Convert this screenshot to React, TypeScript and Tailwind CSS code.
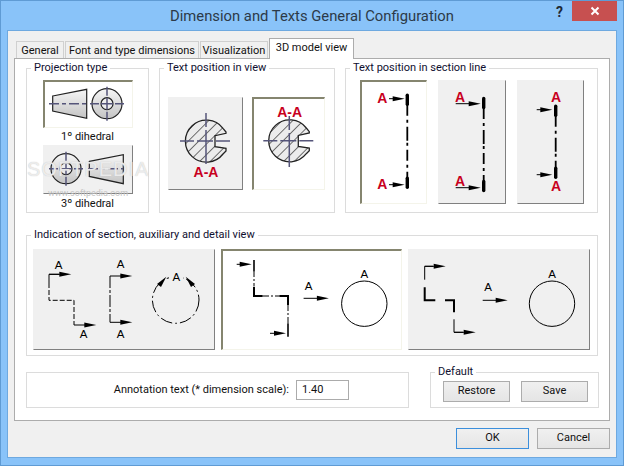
import type { ReactNode } from 'react'

const ui = { fontFamily: 'Roboto, "Liberation Sans", sans-serif' }
const RED = '#c8001e'
const CROSS = '#55557a'

function Arrow({ x1, x2, y, head = 12 }: { x1: number; x2: number; y: number; head?: number }) {
  return (
    <g>
      <line x1={x1} y1={y} x2={x2 - head + 1} y2={y} stroke="#000" strokeWidth={1} />
      <polygon points={`${x2 - head},${y - 2.5} ${x2},${y} ${x2 - head},${y + 2.5}`} fill="#000" />
    </g>
  )
}

function RedA({ x, y, children = 'A', size = 14 }: { x: number; y: number; children?: string; size?: number }) {
  return (
    <text x={x} y={y} textAnchor="middle" fontFamily="Liberation Sans" fontWeight="bold" fontSize={size} fill={RED}>
      {children}
    </text>
  )
}

function SmallA({ x, y }: { x: number; y: number }) {
  return (
    <text x={x} y={y} textAnchor="middle" fontFamily="Liberation Sans" fontSize={11.5} fill="#000">
      A
    </text>
  )
}

function Picture({
  w,
  h,
  sunken = false,
  children,
}: {
  w: number
  h: number
  sunken?: boolean
  children: ReactNode
}) {
  const frame = sunken
    ? 'bg-white border-t-2 border-l-2 border-r border-b border-t-[#85856f] border-l-[#85856f] border-r-[#f4f4ea] border-b-[#f4f4ea]'
    : 'bg-[#f0f0f0] border border-t-[#f0f0f0] border-l-[#f0f0f0] border-r-[#808080] border-b-[#808080]'
  const shift = sunken ? '-mt-[2px] -ml-[2px]' : '-m-px'
  return (
    <div className={`shrink-0 box-border ${frame}`} style={{ width: w, height: h }}>
      {/* drawing coordinates are relative to the outer edge of the button */}
      <svg width={w} height={h} viewBox={`0 0 ${w} ${h}`} className={`block ${shift}`}>
        {children}
      </svg>
    </div>
  )
}

function Grad() {
  return (
    <defs>
      <linearGradient id="steel" x1="0" y1="0" x2="0" y2="1">
        <stop offset="0" stopColor="#f6f6f6" />
        <stop offset="1" stopColor="#c4c4c4" />
      </linearGradient>
      <pattern id="hatch" width="7.5" height="7.5" patternUnits="userSpaceOnUse" patternTransform="rotate(45)">
        <rect width="7.5" height="7.5" fill="#ececec" />
        <line x1="0" y1="0" x2="0" y2="7.5" stroke="#222" strokeWidth="1.25" />
      </pattern>
    </defs>
  )
}

function Cone({ x, top }: { x: number; top: number }) {
  const pts = `${x},${top + 6.7} ${x + 34},${top} ${x + 34},${top + 29} ${x},${top + 21.7}`
  return <polygon points={pts} fill="url(#steel)" stroke="#222" strokeWidth={1.2} />
}

function Wheel({ cx, cy }: { cx: number; cy: number }) {
  return (
    <g>
      <circle cx={cx} cy={cy} r={15} fill="url(#steel)" stroke="#222" strokeWidth={1.2} />
      <circle cx={cx} cy={cy} r={6} fill="#eee" stroke="#222" strokeWidth={1.2} />
      <line x1={cx - 17} y1={cy} x2={cx + 17} y2={cy} stroke={CROSS} strokeWidth={1.5} strokeDasharray="9 2 12 2 9" />
      <line x1={cx} y1={cy - 17} x2={cx} y2={cy + 17} stroke={CROSS} strokeWidth={1.5} strokeDasharray="9 2 12 2 9" />
    </g>
  )
}

function KeyedShaft({ cx, cy, up = 28, down = 23 }: { cx: number; cy: number; up?: number; down?: number }) {
  const p = (dx: number, dy: number) => `${cx + dx} ${cy + dy}`
  const d = `M${p(17, -12.7)} L${p(20, -9)} L${p(20, -7.7)} L${p(9, -5.3)} L${p(9, 5.7)} L${p(20, 7.3)} L${p(20, 10)} L${p(
    17,
    13,
  )} A21 21 0 1 1 ${p(17, -12.7)} Z`
  return (
    <g>
      <path d={d} fill="url(#hatch)" stroke="#222" strokeWidth={1.3} />
      <line x1={cx - 26} y1={cy} x2={cx + 24} y2={cy} stroke={CROSS} strokeWidth={1.5} strokeDasharray="14 3 16 3 14" />
      <line x1={cx} y1={cy - up} x2={cx} y2={cy + down} stroke={CROSS} strokeWidth={1.5} strokeDasharray="14 3 34" />
    </g>
  )
}

function SectionLine({ x, top, bottom }: { x: number; top: number; bottom: number }) {
  return (
    <g stroke="#000" strokeLinecap="round">
      <line x1={x} y1={top + 1.5} x2={x} y2={top + 10.5} strokeWidth={3.4} />
      <line
        x1={x}
        y1={top + 11}
        x2={x}
        y2={bottom - 11}
        strokeWidth={1.8}
        strokeLinecap="butt"
        strokeDasharray="11 4 3 4 14 2 3 4"
      />
      <line x1={x} y1={bottom - 10.5} x2={x} y2={bottom - 1.5} strokeWidth={3.4} />
    </g>
  )
}

function Group({
  title,
  className,
  children,
}: {
  title: string
  className: string
  children: ReactNode
}) {
  return (
    <fieldset className={`box-border border border-[#dcdcdc] shrink-0 ${className}`}>
      <legend className="ml-[4px] px-[3px] text-[11px] leading-[16px] text-[#101030]">{title}</legend>
      {children}
    </fieldset>
  )
}

function PushButton({ label, focused = false, w = 'w-[73px]', h = 'h-[21px]' }: { label: string; focused?: boolean; w?: string; h?: string }) {
  return (
    <button
      className={`${w} ${h} box-border border text-[11px] text-[#111] bg-gradient-to-b from-[#f0f0f0] to-[#e5e5e5] ${
        focused ? 'border-[#3c8fdc]' : 'border-[#acacac]'
      }`}
    >
      {label}
    </button>
  )
}

function Tab({ label, active = false, w }: { label: string; active?: boolean; w: string }) {
  return active ? (
    <div className={`${w} h-[21px] -mb-px z-10 bg-white border border-b-0 border-[#acacac] text-center text-[11px] leading-[18px] text-[#111]`}>
      {label}
    </div>
  ) : (
    <div className={`${w} h-[17px] bg-[#f0f0f0] border border-b-0 border-[#d0d0d0] text-center text-[11px] leading-[17px] text-[#111]`}>
      {label}
    </div>
  )
}

export default function App() {
  return (
    <div className="w-[624px] h-[466px] box-border flex flex-col overflow-hidden bg-[#89c3f9] border border-[#5f9bd4]" style={ui}>
      <div className="h-[29px] shrink-0 flex">
        <div className="w-[68px]" />
        <div className="flex-1 text-center text-[14.8px] leading-[30px] text-[#2c3a48]">Dimension and Texts General Configuration</div>
        <div className="w-[68px] flex items-start">
          <span className="w-[17px] pl-[1px] pt-[1px] text-[14px] leading-[20px] font-bold text-[#1f2a36]">?</span>
          <div className="w-[45px] h-[20px] bg-[#c75050] flex items-center justify-center">
            <svg width="10" height="10" viewBox="0 0 10 10">
              <path d="M1.5 1.5 L8.5 8.5 M8.5 1.5 L1.5 8.5" stroke="#fff" strokeWidth="2" />
            </svg>
          </div>
        </div>
      </div>

      <div className="mx-[6px] h-[428px] box-border border border-[#6ea9e0] bg-[#f0f0f0] flex flex-col px-[6px]">
        <div className="flex items-end pl-[2px] pt-[7px] gap-[1px]">
          <Tab label="General" w="w-[48px]" />
          <Tab label="Font and type dimensions" w="w-[134px]" />
          <Tab label="Visualization" w="w-[68px]" />
          <Tab label="3D model view" active w="w-[85px]" />
        </div>

        <div className="h-[363px] box-border border border-[#acacac] bg-white pl-[11px] pt-[1px] flex flex-col relative">
          <div className="flex gap-[10px] h-[152px]">
            <Group title="Projection type" className="w-[123px] h-[153px]">
              <div className="flex flex-col items-center pt-[4px]">
                <Picture w={90} h={48} sunken>
                  <Grad />
                  <Cone x={9.7} top={9.3} />
                  <line x1={6} y1={23.7} x2={44} y2={23.7} stroke={CROSS} strokeWidth={1.5} strokeDasharray="10 3 4 3" />
                  <Wheel cx={64} cy={23.7} />
                </Picture>
                <div className="text-[11px] leading-[16px] text-[#111] mt-[1px]">1º dihedral</div>
                <Picture w={90} h={49}>
                  <Wheel cx={23} cy={23.7} />
                  <Cone x={46.3} top={9.7} />
                  <line x1={45} y1={23.7} x2={80} y2={23.7} stroke={CROSS} strokeWidth={1.5} strokeDasharray="10 3 4 3" />
                </Picture>
                <div className="text-[11px] leading-[16px] text-[#111] mt-[2px]">3º dihedral</div>
              </div>
            </Group>

            <Group title="Text position in view" className="w-[176px] h-[153px]">
              <div className="flex gap-[9px] pl-[8px] pt-[21px]">
                <Picture w={75} h={93}>
                  <KeyedShaft cx={38} cy={44} />
                  <RedA x={38} y={80}>A-A</RedA>
                </Picture>
                <Picture w={73} h={93} sunken>
                  <KeyedShaft cx={37.3} cy={43.7} up={24.7} down={28} />
                  <RedA x={37.7} y={20}>A-A</RedA>
                </Picture>
              </div>
            </Group>

            <Group title="Text position in section line" className="w-[253px] h-[153px]">
              <div className="flex gap-[11px] pl-[14px] pt-[4px]">
                <Picture w={67} h={124} sunken>
                  <RedA x={22.3} y={23.3}>A</RedA>
                  <Arrow x1={29} x2={44.7} y={18.7} />
                  <SectionLine x={47.3} top={13.7} bottom={108.7} />
                  <RedA x={22.3} y={109.3}>A</RedA>
                  <Arrow x1={29} x2={44.7} y={104.7} />
                </Picture>
                <Picture w={68} h={124}>
                  <RedA x={22} y={22}>A</RedA>
                  <Arrow x1={17.7} x2={42.7} y={23.7} />
                  <SectionLine x={45.7} top={17} bottom={112} />
                  <RedA x={22} y={106}>A</RedA>
                  <Arrow x1={17.7} x2={42.7} y={107.7} />
                </Picture>
                <Picture w={67} h={124}>
                  <RedA x={39} y={22}>A</RedA>
                  <Arrow x1={19.7} x2={35.3} y={29.7} />
                  <SectionLine x={38.7} top={24.7} bottom={98.7} />
                  <Arrow x1={19.7} x2={35.3} y={94.7} />
                  <RedA x={39} y={111}>A</RedA>
                </Picture>
              </div>
            </Group>
          </div>

          <Group title="Indication of section, auxiliary and detail view" className="w-[572px] h-[129px] mt-[15px]">
            <div className="flex gap-[6px] pl-[6px] pt-[6px]">
              <Picture w={182} h={101}>
                <SmallA x={25.7} y={20.3} />
                <path d="M16 34 V25.3 H26" fill="none" stroke="#000" />
                <Arrow x1={16} x2={38.3} y={25.3} />
                <path d="M16 34 V51.3 H41 V76" fill="none" stroke="#000" strokeDasharray="5 2" />
                <Arrow x1={41} x2={63.3} y={76} />
                <SmallA x={50.7} y={89.3} />
                <SmallA x={87.7} y={19.3} />
                <path d="M77 27 V73.3" fill="none" stroke="#000" strokeDasharray="12 2 3 2" />
                <Arrow x1={77} x2={99.3} y={27} />
                <Arrow x1={77} x2={99.3} y={73.3} />
                <SmallA x={87.7} y={89.3} />
                <circle cx={142.7} cy={51} r={23.3} fill="none" stroke="#000" strokeDasharray="12 3 2 3" />
                <polygon points="133.3,27.7 128,38 124,35" fill="#000" />
                <polygon points="152.7,27.7 158,38 162,35" fill="#000" />
                <rect x={136} y={20} width={14} height={13} fill="#f0f0f0" />
                <SmallA x={143.3} y={31.7} />
              </Picture>
              <Picture w={181} h={101} sunken>
                <Arrow x1={15.7} x2={30.7} y={15.3} />
                <line x1={33} y1={11} x2={33} y2={22.7} stroke="#000" strokeWidth={1.6} />
                <line x1={33} y1={23} x2={33} y2={37} stroke="#000" strokeDasharray="5 2 2 2" />
                <path d="M33 37.7 V47 H41.7" fill="none" stroke="#000" strokeWidth={2} />
                <line x1={42} y1={47} x2={58} y2={47} stroke="#000" strokeDasharray="6 2 2 2" />
                <path d="M58.3 47 H67 V56" fill="none" stroke="#000" strokeWidth={2} />
                <line x1={67} y1={56} x2={67} y2={74} stroke="#000" strokeDasharray="6 2 2 2" />
                <line x1={67} y1={74.3} x2={67} y2={87.7} stroke="#000" strokeWidth={1.6} />
                <Arrow x1={49} x2={65} y={84.3} />
                <SmallA x={87.6} y={41} />
                <Arrow x1={82.6} x2={107.9} y={49.3} />
                <circle cx={143.3} cy={54.7} r={22.7} fill="none" stroke="#000" />
                <SmallA x={143.3} y={28.7} />
              </Picture>
              <Picture w={182} h={101}>
                <path d="M16.7 30.7 V17.3 H25" fill="none" stroke="#000" />
                <Arrow x1={16.7} x2={37.7} y={17.3} />
                <path d="M16.7 38.3 V51.3 H27.3" fill="none" stroke="#000" strokeWidth={2} />
                <path d="M37 51.3 H46 V63.3" fill="none" stroke="#000" strokeWidth={2} />
                <path d="M46 70.3 V83.3 H55" fill="none" stroke="#000" />
                <Arrow x1={46} x2={67.7} y={83.3} />
                <SmallA x={80} y={42} />
                <Arrow x1={74.7} x2={99.7} y={51.3} />
                <circle cx={144} cy={54.7} r={22.7} fill="none" stroke="#000" />
                <SmallA x={144} y={28.7} />
              </Picture>
            </div>
          </Group>

          <div className="flex items-end gap-[21px] mt-[8px]">
            <div className="w-[383px] h-[36px] box-border border border-[#dcdcdc] flex items-center justify-end pr-[59px] gap-[7px]">
              <span className="text-[11px] text-[#111]">Annotation text (* dimension scale):</span>
              <div className="w-[53px] h-[20px] box-border border border-[#ababab] bg-white pl-[5px] text-[11px] leading-[18px] text-[#111]">1.40</div>
            </div>
            <Group title="Default" className="w-[169px] h-[44px]">
              <div className="flex gap-[11px] pl-[12px] pt-[1px]">
                <PushButton label="Restore" w="w-[67px]" />
                <PushButton label="Save" w="w-[67px]" />
              </div>
            </Group>
          </div>

          {/* softpedia watermark lying over the first group */}
          <div className="absolute left-[12px] top-[100px] text-[20px] leading-[21px] tracking-[1px] text-white/70 pointer-events-none" style={{ fontFamily: 'Liberation Sans', textShadow: '0 0 1px #bbb' }}>
            SOFTPEDIA
          </div>
          <div className="absolute left-[33px] top-[129px] text-[9px] leading-[10px] text-[#c4c4c4] pointer-events-none">www.softpedia.com</div>
        </div>

        <div className="flex justify-end gap-[8px] pt-[7px]">
          <PushButton label="OK" focused />
          <PushButton label="Cancel" />
        </div>
      </div>
    </div>
  )
}
